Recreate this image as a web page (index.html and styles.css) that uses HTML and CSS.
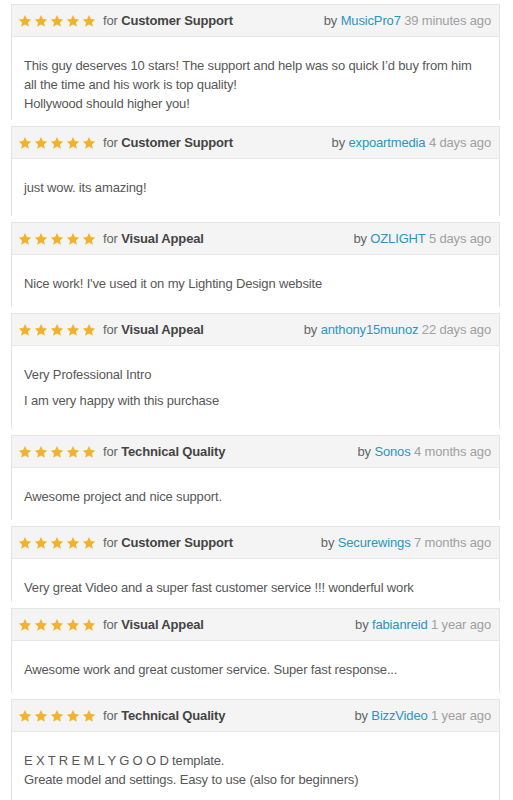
FILE: index.html
```html
<!doctype html>
<html lang="en">
	<head>
		<meta charset="utf-8" />
		<title>Reviews</title>
		<link rel="stylesheet" href="styles.css">
	</head>

	<body>
		<!-- Star shape, reused in every rating -->
		<svg class="defs" width="0" height="0">
			<symbol id="star" viewBox="0 0 24 24">
				<path d="M12 1.5l3.2 6.9 7.4.9-5.5 5.1 1.5 7.4L12 18.1l-6.6 3.7 1.5-7.4-5.5-5.1 7.4-.9z" />
			</symbol>
		</svg>

		<div id="reviews">
			<!-- 1 -->
			<div class="review">
				<div class="review-header">
					<div class="rating">
						<svg class="star"><use href="#star" /></svg><svg class="star"><use href="#star" /></svg><svg class="star"><use href="#star" /></svg><svg class="star"><use href="#star" /></svg><svg class="star"><use href="#star" /></svg>
						<span class="for">for <strong>Customer Support</strong></span>
					</div>
					<div class="meta">by <a href="#">MusicPro7</a> <span class="time">39 minutes ago</span></div>
				</div>
				<div class="review-body short">
					<p>This guy deserves 10 stars! The support and help was so quick I’d buy from him all the time and his work is top quality!<br />Hollywood should higher you!</p>
				</div>
			</div>

			<!-- 2 -->
			<div class="review">
				<div class="review-header">
					<div class="rating">
						<svg class="star"><use href="#star" /></svg><svg class="star"><use href="#star" /></svg><svg class="star"><use href="#star" /></svg><svg class="star"><use href="#star" /></svg><svg class="star"><use href="#star" /></svg>
						<span class="for">for <strong>Customer Support</strong></span>
					</div>
					<div class="meta">by <a href="#">expoartmedia</a> <span class="time">4 days ago</span></div>
				</div>
				<div class="review-body tall">
					<p>just wow. its amazing!</p>
				</div>
			</div>

			<!-- 3 -->
			<div class="review">
				<div class="review-header">
					<div class="rating">
						<svg class="star"><use href="#star" /></svg><svg class="star"><use href="#star" /></svg><svg class="star"><use href="#star" /></svg><svg class="star"><use href="#star" /></svg><svg class="star"><use href="#star" /></svg>
						<span class="for">for <strong>Visual Appeal</strong></span>
					</div>
					<div class="meta">by <a href="#">OZLIGHT</a> <span class="time">5 days ago</span></div>
				</div>
				<div class="review-body">
					<p>Nice work! I've used it on my Lighting Design website</p>
				</div>
			</div>

			<!-- 4 -->
			<div class="review">
				<div class="review-header">
					<div class="rating">
						<svg class="star"><use href="#star" /></svg><svg class="star"><use href="#star" /></svg><svg class="star"><use href="#star" /></svg><svg class="star"><use href="#star" /></svg><svg class="star"><use href="#star" /></svg>
						<span class="for">for <strong>Visual Appeal</strong></span>
					</div>
					<div class="meta">by <a href="#">anthony15munoz</a> <span class="time">22 days ago</span></div>
				</div>
				<div class="review-body tall">
					<p>Very Professional Intro</p>
					<p>I am very happy with this purchase</p>
				</div>
			</div>

			<!-- 5 -->
			<div class="review">
				<div class="review-header">
					<div class="rating">
						<svg class="star"><use href="#star" /></svg><svg class="star"><use href="#star" /></svg><svg class="star"><use href="#star" /></svg><svg class="star"><use href="#star" /></svg><svg class="star"><use href="#star" /></svg>
						<span class="for">for <strong>Technical Quality</strong></span>
					</div>
					<div class="meta">by <a href="#">Sonos</a> <span class="time">4 months ago</span></div>
				</div>
				<div class="review-body">
					<p>Awesome project and nice support.</p>
				</div>
			</div>

			<!-- 6 -->
			<div class="review">
				<div class="review-header">
					<div class="rating">
						<svg class="star"><use href="#star" /></svg><svg class="star"><use href="#star" /></svg><svg class="star"><use href="#star" /></svg><svg class="star"><use href="#star" /></svg><svg class="star"><use href="#star" /></svg>
						<span class="for">for <strong>Customer Support</strong></span>
					</div>
					<div class="meta">by <a href="#">Securewings</a> <span class="time">7 months ago</span></div>
				</div>
				<div class="review-body shortest">
					<p>Very great Video and a super fast customer service !!! wonderful work</p>
				</div>
			</div>

			<!-- 7 -->
			<div class="review">
				<div class="review-header">
					<div class="rating">
						<svg class="star"><use href="#star" /></svg><svg class="star"><use href="#star" /></svg><svg class="star"><use href="#star" /></svg><svg class="star"><use href="#star" /></svg><svg class="star"><use href="#star" /></svg>
						<span class="for">for <strong>Visual Appeal</strong></span>
					</div>
					<div class="meta">by <a href="#">fabianreid</a> <span class="time">1 year ago</span></div>
				</div>
				<div class="review-body">
					<p>Awesome work and great customer service. Super fast response...</p>
				</div>
			</div>

			<!-- 8 -->
			<div class="review">
				<div class="review-header">
					<div class="rating">
						<svg class="star"><use href="#star" /></svg><svg class="star"><use href="#star" /></svg><svg class="star"><use href="#star" /></svg><svg class="star"><use href="#star" /></svg><svg class="star"><use href="#star" /></svg>
						<span class="for">for <strong>Technical Quality</strong></span>
					</div>
					<div class="meta">by <a href="#">BizzVideo</a> <span class="time">1 year ago</span></div>
				</div>
				<div class="review-body">
					<p>E X T R E M L Y G O O D template.<br />Greate model and settings. Easy to use (also for beginners)</p>
				</div>
			</div>
		</div>
	</body>
</html>
```

FILE: styles.css
```css
body {
	margin: 0;
	background: #fff;
	color: #575757;
	font-family: "Liberation Sans", Arial, sans-serif;
	font-size: 13px;
	letter-spacing: -0.15px;
	overflow: hidden;
}

.defs {
	position: absolute;
}

#reviews {
	padding-top: 4px;
	margin: 0 13px 0 11px;
}

.review {
	border: 1px solid #e4e4e4;
	border-bottom: none;
	margin-bottom: 6px;
}

.review-header {
	display: flex;
	align-items: center;
	justify-content: space-between;
	height: 31px;
	padding: 0 8px 0 6px;
	background-color: #f4f4f4;
	border-bottom: 1px solid #e8e8e8;
}

.rating {
	display: flex;
	align-items: center;
	gap: 2px;
}

.star {
	width: 14px;
	height: 14px;
	fill: #f3b22c;
}

.for {
	margin-left: 5px;
	color: #666;
}

.for strong {
	color: #444;
}

.meta {
	color: #666;
}

.meta a {
	color: #2a96bf;
	text-decoration: none;
}

.time {
	color: #a0a0a0;
}

.review-body {
	padding: 19px 12px 14px;
	line-height: 19px;
}

.review-body.short {
	padding-bottom: 7px;
}

.review-body.tall {
	padding-bottom: 19px;
}

.review-body.shortest {
	padding-bottom: 5px;
}

.review-body p {
	margin: 0;
}

.review-body p + p {
	margin-top: 7px;
}
```
